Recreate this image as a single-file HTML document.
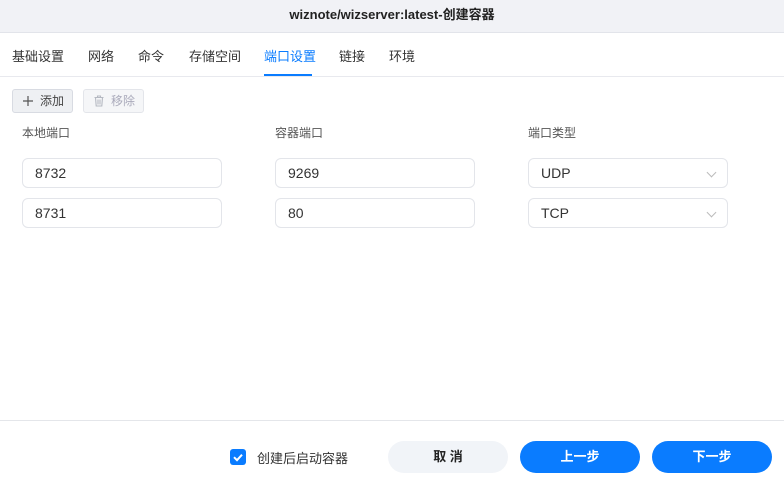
<!DOCTYPE html>
<html><head><meta charset="utf-8"><style>
*{box-sizing:border-box;margin:0;padding:0}
body{width:784px;height:489px;background:#fff;font-family:"Liberation Sans","Noto Sans CJK SC",sans-serif;font-size:13px;color:#333;position:relative;overflow:hidden}
.title{position:absolute;left:0;top:0;width:784px;height:33px;background:#f1f2f6;border-bottom:1px solid #e2e4ea;text-align:center;line-height:30px;font-weight:bold;font-size:13px;color:#222}
.tab{position:absolute;top:46px;font-size:13px;color:#333}
.tabline{position:absolute;left:0;top:76px;width:784px;height:1px;background:#e8e9ee}
.ul{position:absolute;left:264px;top:74px;width:48px;height:2px;background:#0a7cff}
.btn{position:absolute;top:89px;height:24px;border:1px solid #d8dbe2;border-radius:3px;font-size:12px;line-height:22px;padding-left:10px}
.lbl{position:absolute;top:124px;font-size:12px;color:#555}
.in{position:absolute;width:200px;height:30px;border:1px solid #e3e5ea;border-radius:6px;padding-left:12px;line-height:28px;font-size:14px;color:#333}
.chev{position:absolute;right:12px;top:10px;width:7px;height:7px;border-right:1px solid #bbb;border-bottom:1px solid #bbb;transform:rotate(45deg)}
.foot{position:absolute;left:0;top:420px;width:784px;height:1px;background:#e4e6ea}
.fb{position:absolute;top:441px;width:120px;height:32px;border-radius:16px;text-align:center;line-height:32px;font-weight:bold;font-size:13px}
</style></head><body>
<div class="title">wiznote/wizserver:latest-创建容器</div>
<div class="tab" style="left:12px">基础设置</div>
<div class="tab" style="left:88px">网络</div>
<div class="tab" style="left:138px">命令</div>
<div class="tab" style="left:189px">存储空间</div>
<div class="tab" style="left:264px;color:#0a7cff">端口设置</div>
<div class="tab" style="left:339px">链接</div>
<div class="tab" style="left:389px">环境</div>
<div class="tabline"></div><div class="ul"></div>
<div class="btn" style="left:12px;width:61px;background:#eef0f3;color:#444"><svg width="12" height="12" style="position:absolute;left:9px;top:5px"><path d="M6 1v10M1 6h10" stroke="#555" stroke-width="1.2"/></svg><span style="position:absolute;left:27px">添加</span></div>
<div class="btn" style="left:83px;width:61px;background:#f5f6f8;color:#aab;border-color:#e3e5ea"><svg width="12" height="12" style="position:absolute;left:9px;top:5px"><path d="M1.5 2.5h9M4.5 2.5V1h3v1.5M2.5 2.5l.7 8.5h5.6l.7-8.5M5 4.5v5M7 4.5v5" stroke="#b5b9c2" stroke-width="1.1" fill="none"/></svg><span style="position:absolute;left:27px">移除</span></div>
<div class="lbl" style="left:22px">本地端口</div>
<div class="lbl" style="left:275px">容器端口</div>
<div class="lbl" style="left:528px">端口类型</div>
<div class="in" style="left:22px;top:158px">8732</div>
<div class="in" style="left:275px;top:158px">9269</div>
<div class="in" style="left:528px;top:158px">UDP<div class="chev"></div></div>
<div class="in" style="left:22px;top:198px">8731</div>
<div class="in" style="left:275px;top:198px">80</div>
<div class="in" style="left:528px;top:198px">TCP<div class="chev"></div></div>
<div class="foot"></div>
<div style="position:absolute;left:230px;top:449px;width:16px;height:16px;background:#0a7cff;border-radius:3px"><svg width="16" height="16"><path d="M4 8.2l3 3 5-5.5" stroke="#fff" stroke-width="2" fill="none"/></svg></div>
<div style="position:absolute;left:257px;top:448px;font-size:13px;color:#333">创建后启动容器</div>
<div class="fb" style="left:388px;background:#f1f4f8;color:#222">取 消</div>
<div class="fb" style="left:520px;background:#0a7cff;color:#fff">上一步</div>
<div class="fb" style="left:652px;background:#0a7cff;color:#fff">下一步</div>
</body></html>
